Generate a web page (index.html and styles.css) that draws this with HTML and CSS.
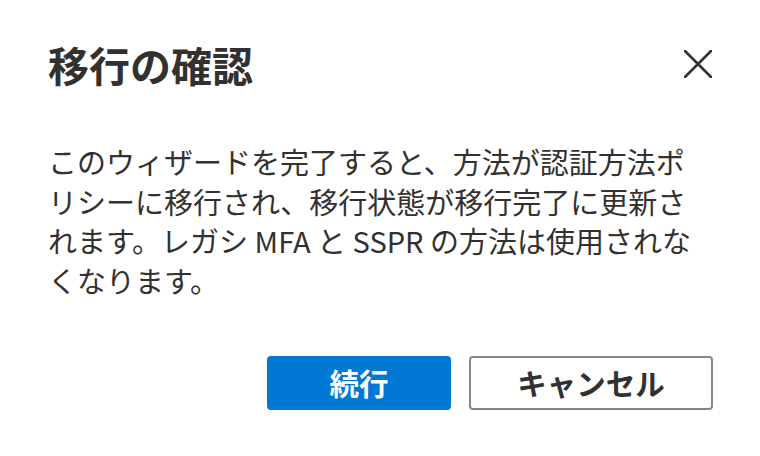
FILE: index.html
```html
<!DOCTYPE html>
<html lang="ja">
<head>
<meta charset="utf-8">
<link rel="stylesheet" href="styles.css">
</head>
<body>
<div class="dialog">
  <div class="header">
    <h1 class="title">移行の確認</h1>
    <button class="close" aria-label="閉じる">
      <svg viewBox="0 0 28 28" width="28" height="28"><path d="M1 1 L27 27 M27 1 L1 27" stroke="#323130" stroke-width="2.6" stroke-linecap="round" fill="none"/></svg>
    </button>
  </div>
  <p class="message">このウィザードを完了すると、方法が認証方法ポリシーに移行され、移行状態が移行完了に更新されます。レガシ MFA と SSPR の方法は使用されなくなります。</p>
  <div class="actions">
    <button class="btn primary">続行</button>
    <button class="btn secondary">キャンセル</button>
  </div>
</div>
</body>
</html>
```
FILE: styles.css
```css
html, body {
  margin: 0;
  padding: 0;
  background: #ffffff;
}
body {
  font-family: "Noto Sans CJK JP", "Noto Sans", sans-serif;
  color: #323130;
}
.dialog {
  width: 760px;
  height: 456px;
  box-sizing: border-box;
  padding: 36px 47px 0 48px;
  display: flex;
  flex-direction: column;
}
.header {
  display: flex;
  align-items: center;
  justify-content: space-between;
  height: 56px;
}
.title {
  margin: 0;
  font-size: 41px;
  line-height: 56px;
  font-weight: 700;
  color: #323130;
}
.close {
  width: 28px;
  height: 28px;
  padding: 0;
  border: 0;
  background: transparent;
  display: flex;
  margin-right: 1px;
}
.message {
  margin: 50px 0 0 0;
  font-size: 29px;
  line-height: 39.5px;
  font-weight: 400;
  color: #323130;
}
.actions {
  margin-top: 56px;
  display: flex;
  justify-content: flex-end;
  gap: 18px;
}
.btn {
  height: 54px;
  box-sizing: border-box;
  border-radius: 4px;
  font-family: "Noto Sans CJK JP", "Noto Sans", sans-serif;
  font-size: 29.5px;
  font-weight: 700;
  padding: 0;
  line-height: 1;
}
.primary {
  width: 184px;
  background: #0078d4;
  border: 2px solid #0078d4;
  color: #ffffff;
}
.secondary {
  width: 244px;
  background: #ffffff;
  border: 2px solid #8a8886;
  color: #323130;
}
```
